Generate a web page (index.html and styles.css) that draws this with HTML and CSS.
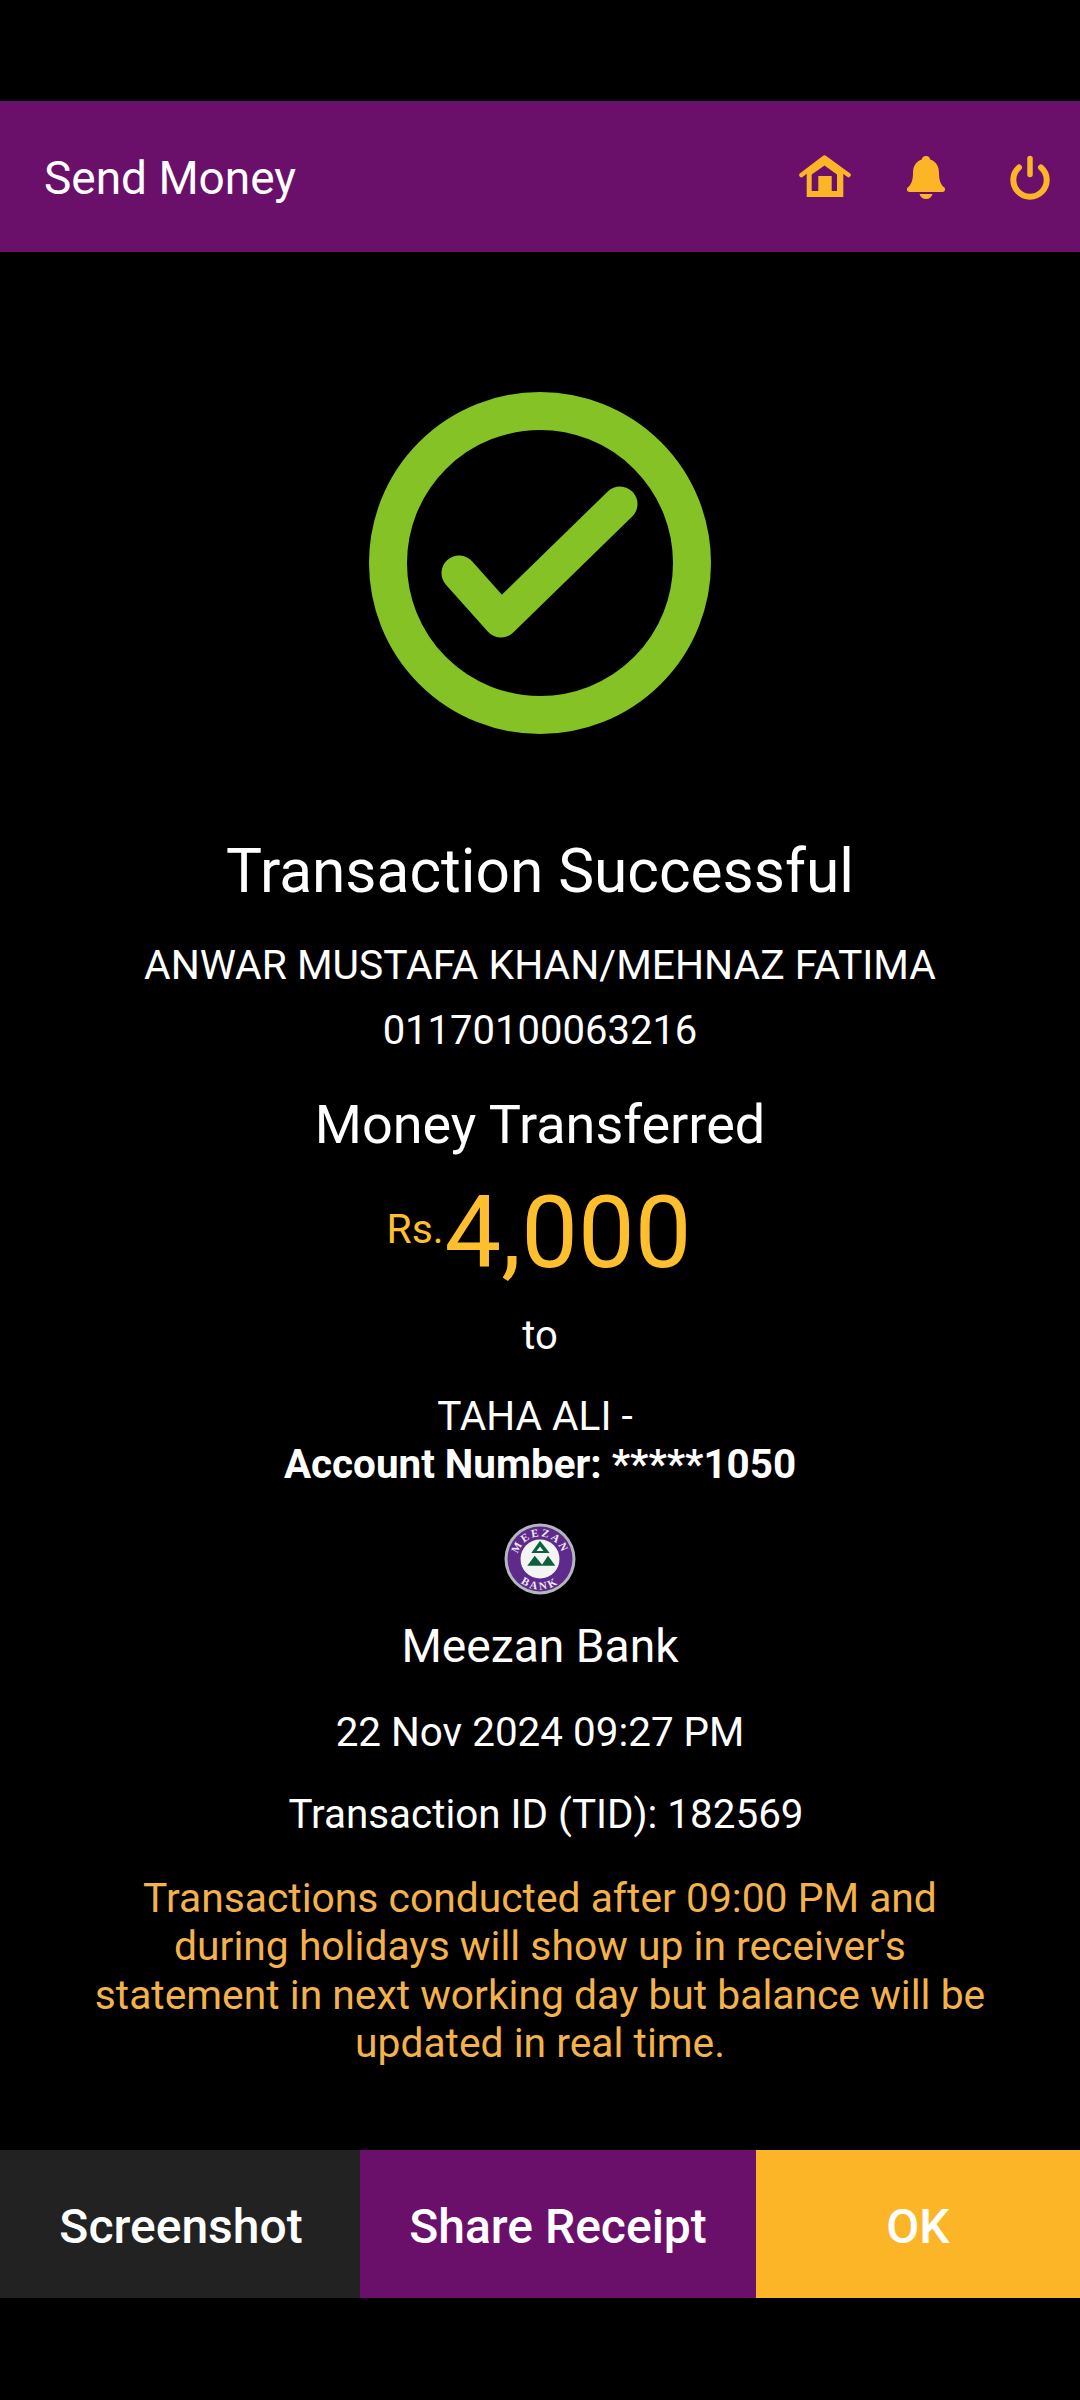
FILE: index.html
```html
<!DOCTYPE html>
<html lang="en">
<head>
<meta charset="utf-8">
<title>Send Money</title>
<link rel="stylesheet" href="styles.css">
</head>
<body>
<div class="screen">
  <header class="header">
    <h1 class="title">Send Money</h1>
    <div class="actions">
      <svg class="icon" viewBox="0 0 52 44" width="52" height="44" aria-hidden="true">
        <path d="M2.500 20 25.500 2.500 49.500 20" fill="none" stroke="#fdb528" stroke-width="4.600" stroke-linecap="round" stroke-linejoin="round"/>
        <path fill-rule="evenodd" fill="#fdb528" d="M7.700 42V18L25.500 4 44.300 18V42ZM12.700 19.500V36H19.300V21H32.700V36H38V19.500L25.500 10.500Z"/>
      </svg>
      <svg class="icon" viewBox="0 0 40 44" width="40" height="44" aria-hidden="true">
        <path fill="#fdb528" d="M20 1c2.600 0 4 1.600 4.200 3.600C30 6.400 33 11.500 33 18c0 8 2 11.500 5.300 14.600 1.500 1.500.8 4.400-1.800 4.400H3.500C.9 37 .2 34.100 1.700 32.600 5 29.500 7 26 7 18 7 11.500 10 6.400 15.800 4.600 16 2.600 17.400 1 20 1Z"/>
        <path fill="#fdb528" d="M13.500 39h13c-.8 3-3.300 5-6.500 5s-5.700-2-6.500-5Z"/>
      </svg>
      <svg class="icon icon-power" viewBox="0 0 42 46" width="42" height="46" aria-hidden="true">
        <path d="M10 13.400a16.700 16.700 0 1 0 22 0" fill="none" stroke="#fdb528" stroke-width="6" stroke-linecap="round"/>
        <path d="M21 4.500v16" fill="none" stroke="#fdb528" stroke-width="5.500" stroke-linecap="round"/>
      </svg>
    </div>
  </header>

  <main class="content">
    <svg class="check" viewBox="0 0 342 342" width="342" height="342" aria-hidden="true">
      <circle cx="171" cy="171" r="152" fill="none" stroke="#84c225" stroke-width="38"/>
      <path d="M90 181l42 47L251 112" fill="none" stroke="#84c225" stroke-width="35" stroke-linecap="round" stroke-linejoin="round"/>
    </svg>

    <h2 class="status">Transaction Successful</h2>
    <p class="name">ANWAR MUSTAFA KHAN/MEHNAZ FATIMA</p>
    <p class="account">01170100063216</p>
    <p class="transferred">Money Transferred</p>
    <p class="amount"><span class="currency">Rs.</span><span class="value">4,000</span></p>
    <p class="to">to</p>
    <p class="receiver">TAHA ALI -&nbsp;</p>
    <p class="receiver-account">Account Number: *****1050</p>

    <svg class="bank-logo" viewBox="0 0 72 72" width="72" height="72" aria-hidden="true">
      <circle cx="36" cy="36" r="35.500" fill="#b4b7bb"/>
      <circle cx="36" cy="36" r="32.500" fill="#5e2a8c"/>
      <circle cx="36" cy="36" r="19.500" fill="#f4f4f4"/>
      <path fill="#0e5f3c" fill-rule="evenodd" d="M36 17.700 45.700 30H27.300ZM36 23.500 32.500 28h7Z"/>
      <path fill="#0e5f3c" d="M30.700 32.700 39 42.700H23.300ZM44 32.700 51.300 42.700H37.300Z"/>
      <path id="logo-top" fill="none" d="M13.500 36a22.500 22.500 0 0 1 45 0"/>
      <path id="logo-bottom" fill="none" d="M5.500 36a30.500 30.500 0 0 0 61 0"/>
      <text class="logo-text logo-top"><textPath href="#logo-top" startOffset="50%" text-anchor="middle">MEEZAN</textPath></text>
      <text class="logo-text logo-bottom"><textPath href="#logo-bottom" startOffset="50%" text-anchor="middle">BANK</textPath></text>
    </svg>

    <p class="bank">Meezan Bank</p>
    <p class="date">22 Nov 2024 09:27 PM</p>
    <p class="tid">Transaction ID (TID): 182569</p>
    <p class="notice">Transactions conducted after 09:00 PM and during holidays will show up in receiver's statement in next working day but balance will be updated in real time.</p>
  </main>

  <footer class="footer">
    <button class="btn btn-dark">Screenshot</button>
    <button class="btn btn-purple">Share Receipt</button>
    <button class="btn btn-amber">OK</button>
  </footer>
</div>
</body>
</html>
```

FILE: styles.css
```css
* {
  box-sizing: border-box;
}

html,
body {
  margin: 0;
  background: #000;
}

.screen {
  width: 1080px;
  height: 2400px;
  padding-top: 101px;
  display: flex;
  flex-direction: column;
  background: #000;
  color: #fff;
  font-family: Roboto, "Liberation Sans", sans-serif;
}

.header {
  height: 151px;
  flex: none;
  display: flex;
  align-items: center;
  justify-content: space-between;
  padding: 0 29px 0 44px;
  background: #6a106b;
}

.title {
  margin: 0;
  padding-top: 2px;
  font-size: 46px;
  font-weight: 400;
}

.actions {
  display: flex;
  align-items: center;
  gap: 55px;
}

.icon-power {
  margin-left: 8px;
}

.content {
  flex: 1;
  display: flex;
  flex-direction: column;
  align-items: center;
  padding-top: 140px;
  text-align: center;
}

.content p,
.content h2 {
  margin: 0;
  font-weight: 400;
}

.check {
  display: block;
}

.content .status {
  margin-top: 99px;
  font-size: 60.400px;
  line-height: 78px;
}

.content .name {
  margin-top: 28px;
  font-size: 40.800px;
  line-height: 52px;
}

.content .account {
  margin-top: 14px;
  font-size: 40px;
  line-height: 52px;
}

.content .transferred {
  margin-top: 36px;
  font-size: 54px;
  line-height: 64px;
}

.content .amount {
  margin-top: 24px;
  margin-left: -2px;
  color: #fdbf2d;
  line-height: 104px;
  display: flex;
  align-items: baseline;
}

.currency {
  font-size: 40.800px;
  position: relative;
  top: -24px;
  margin-right: 1px;
}

.value {
  font-size: 101px;
}

.content .to {
  margin-top: 5px;
  font-size: 40px;
  line-height: 52px;
}

.content .receiver {
  margin-top: 30px;
  font-size: 40.600px;
  line-height: 48px;
}

.content .receiver-account {
  font-size: 40.400px;
  line-height: 49px;
  font-weight: 700;
}

.bank-logo {
  margin-top: 34px;
  display: block;
}

.logo-text {
  font-family: "Liberation Serif", serif;
  font-size: 11px;
  font-weight: 700;
  fill: #f2edf5;
}

.logo-top {
  letter-spacing: 2px;
}

.logo-bottom {
  letter-spacing: 2.500px;
}

.content .bank {
  margin-top: 23px;
  font-size: 46.200px;
  line-height: 56px;
}

.content .date {
  margin-top: 34px;
  font-size: 40.400px;
  line-height: 50px;
}

.content .tid {
  margin-top: 32px;
  padding-left: 12px;
  font-size: 40.400px;
  line-height: 50px;
}

.content .notice {
  margin-top: 34px;
  width: 900px;
  color: #f3b24b;
  font-size: 40.800px;
  line-height: 48.300px;
}

.footer {
  flex: none;
  height: 148px;
  margin-bottom: 102px;
  display: flex;
}

.btn {
  border: 0;
  padding: 5px 0 0;
  color: #fff;
  font-family: inherit;
  font-size: 48px;
  font-weight: 500;
}

.btn-dark {
  width: 360px;
  padding-left: 2px;
  background: #222;
}

.btn-purple {
  width: 396px;
  background: #6a106b;
}

.btn-amber {
  width: 324px;
  background: #fdb528;
}
```
